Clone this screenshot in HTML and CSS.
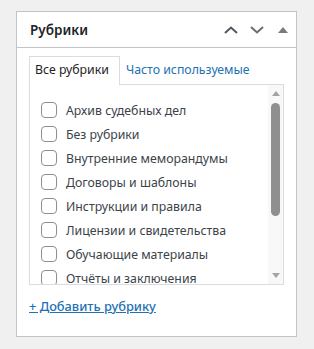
FILE: index.html
```html
<!DOCTYPE html>
<html lang="ru">
<head>
    <meta charset="UTF-8">
    <meta name="viewport" content="width=device-width, initial-scale=1.0">
    <title>Рубрики</title>
    <link rel="stylesheet" href="styles.css">
</head>
<body>
    <div class="postbox">
        <div class="postbox-header">
            <h2>Рубрики</h2>
            <div class="handle-actions">
                <button class="handle-btn" aria-label="Вверх">
                    <svg width="14" height="8" viewBox="0 0 14 8"><path d="M1 7 L7 1.5 L13 7" fill="none" stroke="#50575e" stroke-width="2"/></svg>
                </button>
                <button class="handle-btn" aria-label="Вниз">
                    <svg width="14" height="8" viewBox="0 0 14 8"><path d="M1 1 L7 6.5 L13 1" fill="none" stroke="#6b6e60" stroke-width="2"/></svg>
                </button>
                <button class="handle-btn" aria-label="Свернуть">
                    <svg width="10" height="6" viewBox="0 0 10 6"><path d="M0 6 L5 0 L10 6 Z" fill="#787c82"/></svg>
                </button>
            </div>
        </div>
        <div class="inside">
            <ul class="category-tabs">
                <li class="tab active">Все рубрики</li>
                <li class="tab"><a href="#">Часто используемые</a></li>
            </ul>
            <div class="tabs-panel">
                <ul class="categorychecklist">
                    <li><label><span class="checkbox"></span>Архив судебных дел</label></li>
                    <li><label><span class="checkbox"></span>Без рубрики</label></li>
                    <li><label><span class="checkbox"></span>Внутренние меморандумы</label></li>
                    <li><label><span class="checkbox"></span>Договоры и шаблоны</label></li>
                    <li><label><span class="checkbox"></span>Инструкции и правила</label></li>
                    <li><label><span class="checkbox"></span>Лицензии и свидетельства</label></li>
                    <li><label><span class="checkbox"></span>Обучающие материалы</label></li>
                    <li><label><span class="checkbox"></span>Отчёты и заключения</label></li>
                </ul>
                <div class="scrollbar">
                    <span class="arrow-up"></span>
                    <span class="thumb"></span>
                    <span class="spacer"></span>
                    <span class="arrow-down"></span>
                </div>
            </div>
            <p class="add-new"><a href="#">+ Добавить рубрику</a></p>
        </div>
    </div>
</body>
</html>
```

FILE: styles.css
```css
body {
    background: #f0f0f1;
    color: #3c434a;
    font-family: "Noto Sans", sans-serif;
    font-size: 12.3px;
    margin: 0;
    padding: 11px 0 0 16px;
}
.postbox {
    width: 281px;
    height: 326px;
    box-sizing: border-box;
    background: #fff;
    border: 1px solid #c3c4c7;
}
.postbox-header {
    display: flex;
    align-items: center;
    height: 35px;
    border-bottom: 1px solid #c3c4c7;
}
.postbox-header h2 {
    flex: 1;
    margin: 0;
    padding-left: 13px;
    font-size: 13.5px;
    font-weight: 600;
    color: #1d2327;
}
.handle-actions {
    display: flex;
}
.handle-btn {
    width: 26px;
    height: 35px;
    padding: 0;
    border: none;
    background: none;
    display: flex;
    align-items: center;
    justify-content: center;
}
.inside {
    padding: 8px 12px 0;
}
.category-tabs {
    display: flex;
    list-style: none;
    margin: 0;
    padding: 0;
}
.tab {
    padding: 3px 10px 5px 5px;
    line-height: 19px;
    border: 1px solid transparent;
    border-bottom: none;
}
.tab.active {
    border-color: #dcdcde;
    color: #1d2327;
    margin-bottom: -1px;
    padding-bottom: 5px;
    background: #fff;
    position: relative;
}
.tab a {
    color: #2271b1;
    text-decoration: none;
}
.tabs-panel {
    display: flex;
    height: 199px;
    border: 1px solid #dcdcde;
    overflow: hidden;
}
.categorychecklist {
    flex: 1;
    list-style: none;
    margin: 0;
    padding: 13px 0 0 11px;
}
.categorychecklist li {
    height: 24px;
    display: flex;
    align-items: center;
}
.categorychecklist label {
    display: flex;
    align-items: center;
}
.checkbox {
    width: 16px;
    height: 16px;
    box-sizing: border-box;
    border: 1px solid #8c8f94;
    border-radius: 4px;
    margin-right: 9px;
}
.scrollbar {
    width: 15px;
    background: #f8f8f8;
    display: flex;
    flex-direction: column;
    align-items: center;
    padding: 6px 0 6px;
    box-sizing: border-box;
}
.arrow-up {
    width: 0;
    height: 0;
    border-left: 4px solid transparent;
    border-right: 4px solid transparent;
    border-bottom: 5px solid #a3a3a3;
}
.thumb {
    width: 9px;
    height: 113px;
    margin-top: 7px;
    background: #8f8f8f;
    border-radius: 5px;
}
.spacer {
    flex: 1;
}
.arrow-down {
    width: 0;
    height: 0;
    border-left: 4px solid transparent;
    border-right: 4px solid transparent;
    border-top: 5px solid #a3a3a3;
}
.add-new {
    margin: 12px 0 0;
    line-height: 18px;
}
.add-new a {
    color: #2271b1;
    font-size: 12.8px;
    font-weight: 500;
    text-decoration: underline;
}
```
